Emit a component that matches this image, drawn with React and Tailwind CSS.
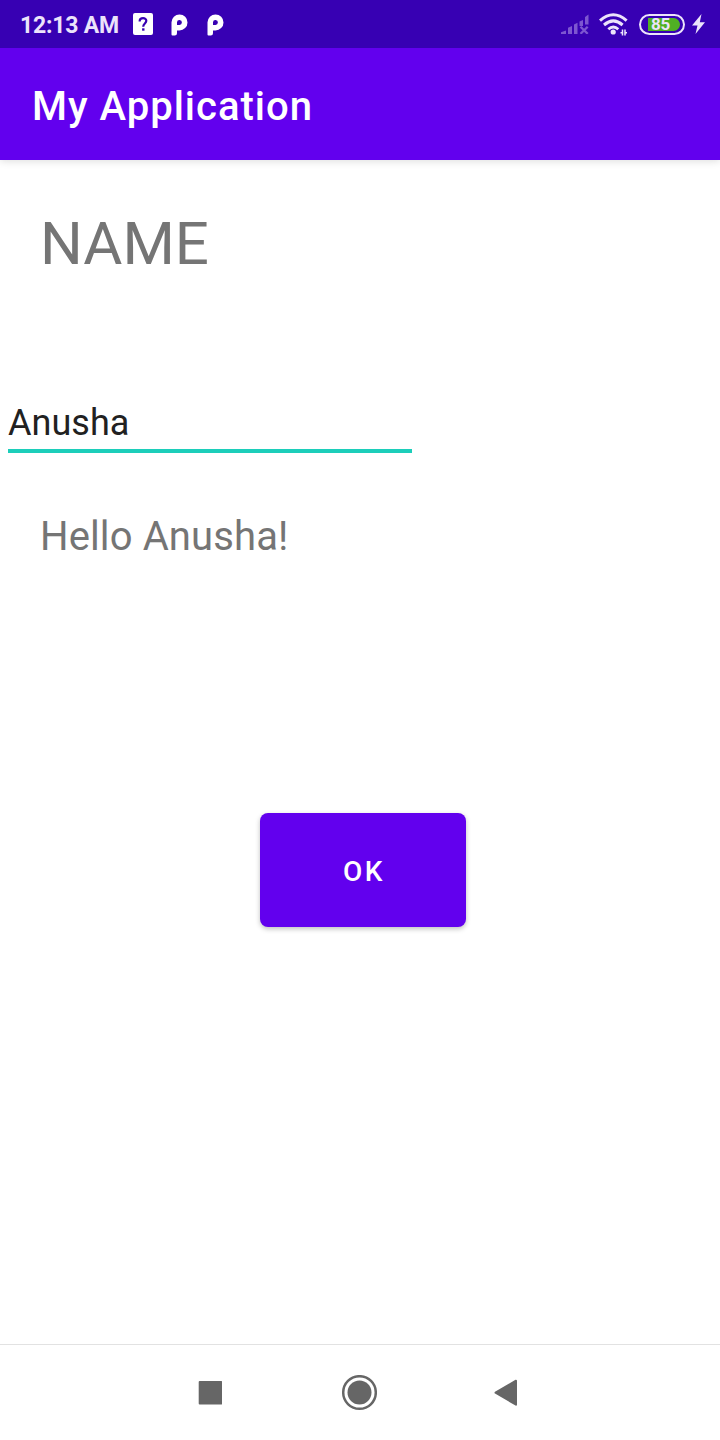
const PLogo = () => (
  <svg className="h-[22px] w-[18px] shrink-0" viewBox="0 0 18 22" fill="white">
    <path
      fillRule="evenodd"
      d="M1.500 20.500V8.300A8 8 0 1 1 9.500 16.400H7V19.200Q7 21.500 4.800 21.500H2.500Q1.500 21.500 1.500 20.500ZM7 8.300V10.900H9.300A2.450 2.450 0 1 0 7 8.300Z"
    />
  </svg>
);

function StatusBar() {
  return (
    <header className="relative z-10 flex h-12 items-center bg-[#3700b3] pl-5 text-[#ece3fb]">
      <span className="w-[113px] shrink-0 whitespace-nowrap pt-[3px] text-[23px] leading-7 font-bold tracking-[-0.2px]">12:13 AM</span>
      <svg className="h-[22px] w-5 shrink-0" viewBox="0 0 20 22" fill="none">
        <rect width="20" height="22" rx="2" fill="white" />
        <path d="M6.700 8.500V7.800C6.900 4.300 13.400 4.300 13.300 7.800C13.300 10.400 10.200 10.600 10.200 13.700" stroke="#3700b3" strokeWidth="2.200" />
        <rect x="9.100" y="15.300" width="2.400" height="2.400" fill="#3700b3" />
      </svg>
      <div className="ml-[17px] flex gap-[18px] pt-px">
        <PLogo />
        <PLogo />
      </div>
      <div className="ml-auto flex items-center pr-[15px]">
        <svg className="mr-2.5 h-5 w-7" viewBox="0 0 28 20">
          <path fill="#7d56d0" d="M0 20v-1.800L5 16.500V20zM7 20v-6.200l4-1.700V20zM13 20V10.500l3.500-1.800V20zM18.500 12V7.500l3.500-1.600V12zM24 10.500V3l3.500-2.500V10.500z" />
          <path d="M19.500 12.800l7.200 7M26.700 12.800l-7.200 7" stroke="#7d56d0" strokeWidth="2.300" />
        </svg>
        <svg className="mr-2.5 h-6 w-[30px]" viewBox="0 0 30 24" fill="none" stroke="#ece3fb">
          <path d="M1 8.600Q14.300-3 27.600 8.600" strokeWidth="3" />
          <path d="M5 13Q14.300 4.800 23.600 13" strokeWidth="3" />
          <path d="M9.300 17.300Q14.300 12.600 19.300 17.300" strokeWidth="2.800" />
          <circle cx="14.200" cy="20" r="2.600" fill="#ece3fb" stroke="none" />
          <path d="M23.500 17.500V23.500M21.500 20.800H23.500M26 17.500V23.500M26 20.800H28" strokeWidth="1.500" />
        </svg>
        <div className="mr-[7px] flex h-[21px] w-[46px] items-center rounded-full border-2 border-[#ece3fb] px-[3px]">
          <div className="ml-1 flex h-[13px] w-8 items-center rounded-r-full bg-[#50b024] pl-[3px]">
            <span className="text-[17px] leading-[13px] font-bold tracking-[-0.2px]">85</span>
          </div>
        </div>
        <svg className="h-5 w-[13px]" viewBox="0 0 13 20">
          <path d="M9.500 0L0 11.500H5.500L3.500 20L13 8.300H7.800z" fill="#ece3fb" />
        </svg>
      </div>
    </header>
  );
}

export default function App() {
  return (
    <div className="flex h-[1440px] w-[720px] flex-col overflow-hidden bg-white font-['Roboto',sans-serif]">
      <StatusBar />
      <div className="flex h-28 items-center bg-[#6200ee] pl-8 shadow-[0_1px_8px_rgba(0,0,0,0.14)]">
        <h1 className="pt-1.5 text-[40px] leading-[48px] font-medium tracking-[1px] text-white">My Application</h1>
      </div>
      <main className="flex flex-1 flex-col items-start">
        <p className="mt-[49px] ml-10 text-[60px] leading-[70px] text-[#757575]">NAME</p>
        <div className="mt-[122px] ml-2 w-[404px] border-b-4 border-[#1cceba]">
          <p className="h-12 text-[36px] leading-[44px] tracking-[0.05px] text-[#212121]">Anusha</p>
        </div>
        <p className="mt-[60px] ml-10 text-[40px] leading-[48px] tracking-[0.12px] text-[#757575]">Hello Anusha!</p>
        <button className="mt-[252px] ml-[260px] h-[114px] w-[206px] rounded-lg bg-[#6200ee] pt-1 pl-0.5 text-[28px] leading-8 font-medium tracking-[2.5px] text-white shadow-[0_2px_5px_rgba(0,0,0,0.25)]">
          OK
        </button>
      </main>
      <nav className="flex h-24 items-center border-t border-[#e2e2e2] pl-[198px]">
        <svg className="h-6 w-6" viewBox="0 0 24 24">
          <rect x="0.700" y="0" width="23.500" height="23.500" rx="1" fill="#666666" />
        </svg>
        <svg className="ml-[119px] h-9 w-9" viewBox="0 0 36 36">
          <circle cx="18.500" cy="17.500" r="16.300" fill="none" stroke="#666666" strokeWidth="2.500" />
          <circle cx="18.500" cy="17.500" r="12" fill="#666666" />
        </svg>
        <svg className="ml-[117px] h-[27px] w-[23px]" viewBox="0 0 23 27">
          <path d="M1.500 13.700L22 1.700V25.700z" fill="#666666" stroke="#666666" strokeWidth="2" strokeLinejoin="round" />
        </svg>
      </nav>
    </div>
  );
}
